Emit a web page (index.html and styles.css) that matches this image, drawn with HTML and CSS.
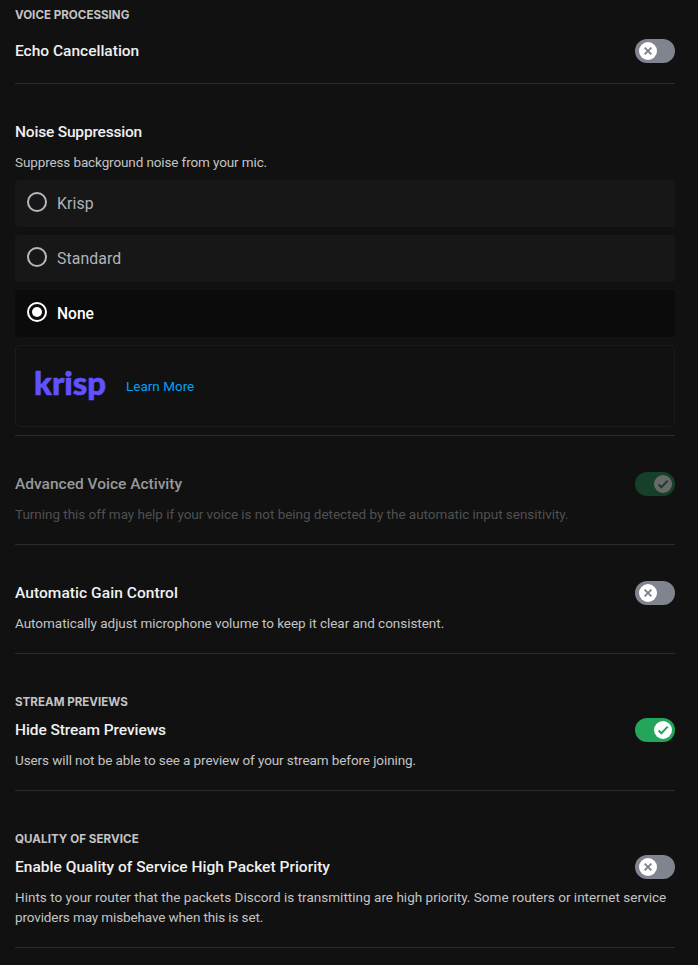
FILE: index.html
```html
<!DOCTYPE html>
<html lang="en">
<head>
<meta charset="utf-8">
<title>Voice settings</title>
<link rel="stylesheet" href="styles.css">
</head>
<body>
<svg class="defs" width="0" height="0" aria-hidden="true">
  <symbol id="cross" viewBox="0 0 12 12"><path d="M2.6 2.6 9.4 9.4M9.4 2.6 2.6 9.4"/></symbol>
  <symbol id="check" viewBox="0 0 12 12"><path d="M1.5 6.5 4.4 9.3 10.7 2.6"/></symbol>
</svg>
<main class="settings">
  <section class="group first">
    <h2 class="label">VOICE PROCESSING</h2>
    <div class="row"><h3 class="title">Echo Cancellation</h3><span class="switch"><span class="knob"><svg><use href="#cross"/></svg></span></span></div>
  </section>

  <section class="group noise">
    <h3 class="title t-noise">Noise Suppression</h3>
    <p class="desc d-noise">Suppress background noise from your mic.</p>
    <div class="options">
      <div class="option"><span class="radio"></span><span class="name">Krisp</span></div>
      <div class="option"><span class="radio"></span><span class="name">Standard</span></div>
      <div class="option selected"><span class="radio"></span><span class="name">None</span></div>
    </div>
    <div class="card">
      <svg class="logo" width="74" height="44" viewBox="0 0 74 44"><text x="0" y="31" textLength="72" lengthAdjust="spacingAndGlyphs">krisp</text></svg>
      <a class="link">Learn More</a>
    </div>
  </section>

  <section class="group disabled">
    <div class="row"><h3 class="title">Advanced Voice Activity</h3><span class="switch on"><span class="knob"><svg><use href="#check"/></svg></span></span></div>
    <p class="desc">Turning this off may help if your voice is not being detected by the automatic input sensitivity.</p>
  </section>

  <section class="group">
    <div class="row"><h3 class="title t-gain">Automatic Gain Control</h3><span class="switch"><span class="knob"><svg><use href="#cross"/></svg></span></span></div>
    <p class="desc">Automatically adjust microphone volume to keep it clear and consistent.</p>
  </section>

  <section class="group labelled">
    <h2 class="label">STREAM PREVIEWS</h2>
    <div class="row"><h3 class="title t-hide">Hide Stream Previews</h3><span class="switch on"><span class="knob"><svg><use href="#check"/></svg></span></span></div>
    <p class="desc d-users">Users will not be able to see a preview of your stream before joining.</p>
  </section>

  <section class="group labelled">
    <h2 class="label l-quality">QUALITY OF SERVICE</h2>
    <div class="row"><h3 class="title t-quality">Enable Quality of Service High Packet Priority</h3><span class="switch"><span class="knob"><svg><use href="#cross"/></svg></span></span></div>
    <p class="desc d-hints">Hints to your router that the packets Discord is transmitting are high priority. Some routers or internet service<br><span class="d-noise">providers may misbehave when this is set.</span></p>
  </section>
</main>
</body>
</html>
```
FILE: styles.css
```css
* { box-sizing: border-box; }
body { margin: 0; background: #111111; font-family: Roboto, "Liberation Sans", sans-serif; }
h2, h3, p { margin: 0; }
.defs { display: block; height: 0; }
.settings { width: 660px; margin-left: 15px; }

.group { padding: 36px 0 20px; border-bottom: 1px solid #2b2b2b; }
.group.first { padding-top: 7px; padding-bottom: 20px; }
.group.noise { padding-bottom: 8px; }
.group.labelled { padding-top: 40px; }
.label { font-family: Inter, sans-serif; font-size: 11.6px; line-height: 16px; font-weight: 700; color: #c4c4c4; margin-bottom: 8px; }
.first .label { margin-bottom: 16px; }
.l-quality { letter-spacing: .05px; }

.row { display: flex; justify-content: space-between; }
.title { font-size: 15.5px; line-height: 24px; font-weight: 500; color: #f0f0f0; }
.t-noise { letter-spacing: -.19px; }
.t-gain { letter-spacing: .06px; }
.t-hide { letter-spacing: -.08px; }
.t-quality { letter-spacing: .02px; }
.desc { margin-top: 8px; font-size: 13.5px; line-height: 20px; letter-spacing: -.035px; color: #c4c4c4; white-space: nowrap; }
.d-noise { letter-spacing: -.12px; }
.d-users { letter-spacing: -.09px; }
.d-hints { letter-spacing: .02px; }

.switch { display: flex; width: 40px; height: 24px; padding: 3px; border-radius: 12px; background: #80848e; color: #80848e; }
.knob { display: flex; align-items: center; justify-content: center; width: 18px; height: 18px; margin: 0 .5px; border-radius: 50%; background: #fff; }
.knob svg { width: 12px; height: 12px; fill: none; stroke: currentColor; stroke-width: 2; }
.switch.on { justify-content: flex-end; background: #23a55a; color: #23a55a; }
.disabled .title { color: #999999; }
.disabled .desc { color: #505050; }
.disabled .switch { background: #164029; color: #164029; }
.disabled .knob { background: #696969; }

.options { display: grid; gap: 8px; margin-top: 8px; }
.option { display: flex; align-items: center; gap: 10px; height: 47px; padding: 0 12px; border-radius: 3px; background: #171717; color: #b0b3b9; }
.radio { display: flex; align-items: center; justify-content: center; width: 20px; height: 20px; margin-bottom: 3px; border: 2px solid #b5b8be; border-radius: 50%; }
.name { font-size: 15.8px; line-height: 20px; font-weight: 400; letter-spacing: .1px; }
.selected { background: #0b0b0b; color: #fff; }
.selected .name { font-size: 15.6px; font-weight: 500; letter-spacing: 0; }
.selected .radio { border-color: #fff; }
.selected .radio::before { content: ""; width: 10px; height: 10px; border-radius: 50%; background: #fff; }

.card { display: flex; align-items: center; gap: 18px; height: 82px; margin-top: 8px; padding: 0 18px; border: 1px solid #1b1b1b; border-radius: 5px; }
.logo { display: block; }
.logo text { font: 900 32px Lato, sans-serif; fill: #6251ff; stroke: #6251ff; stroke-width: .6px; stroke-linejoin: round; }
.link { font-size: 13.5px; line-height: 20px; color: #00a0f8; }
```
